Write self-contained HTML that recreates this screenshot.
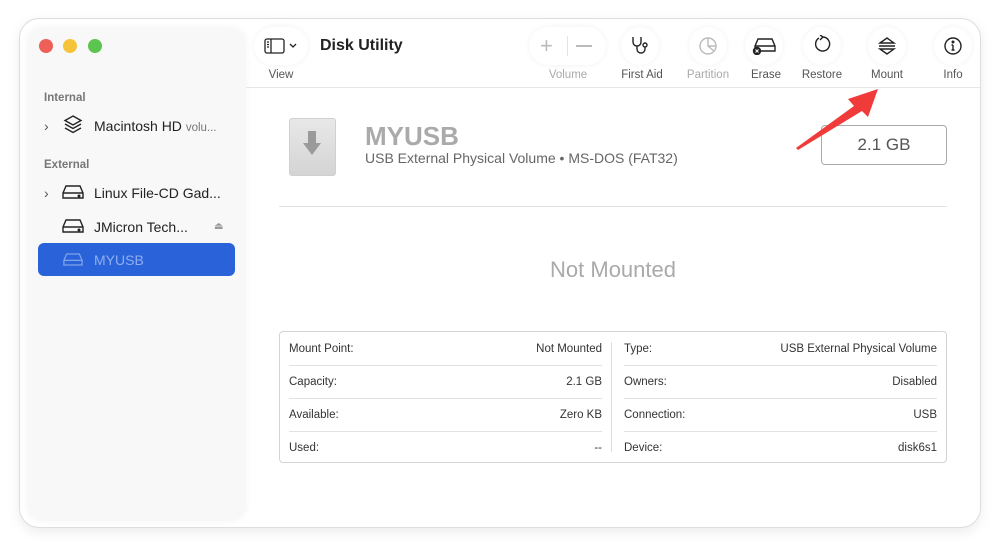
<!DOCTYPE html><html><head><style>
body{margin:0;width:1000px;height:548px;background:#fff;font-family:"Liberation Sans",sans-serif;position:relative;overflow:hidden}
.a{position:absolute}
.win{left:19px;top:18px;width:962px;height:510px;border-radius:20px;border:1px solid #ddd;box-shadow:0 4px 12px rgba(0,0,0,.08);background:#fff;box-sizing:border-box}
.side{left:28px;top:28px;width:217px;height:492px;background:#f8f8f8;border-radius:14px;box-shadow:0 0 8px rgba(0,0,0,.06)}
.dot{width:14px;height:14px;border-radius:50%;top:39px}
.hd{font-size:11.5px;color:#777;font-weight:bold}
.it{font-size:14px;color:#222}
.btn{width:38px;height:38px;border-radius:50%;background:#fff;box-shadow:0 0 6px rgba(0,0,0,.06)}
.lbl{font-size:11.5px;color:#555;top:69px;text-align:center}
.t td{font-size:11.5px;color:#333;height:32px}
</style></head><body>
<div class="a win"></div>
<div class="a side"></div>
<div class="a dot" style="left:39px;background:#ed5f57"></div>
<div class="a dot" style="left:63px;background:#f5c43b"></div>
<div class="a dot" style="left:88px;background:#5cc54f"></div>
<div class="a hd" style="left:44px;top:92px">Internal</div>
<div class="a it" style="left:44px;top:118px;color:#555">›</div>
<svg class="a" style="left:62px;top:114px" width="22" height="22" viewBox="0 0 22 22" fill="none" stroke="#222" stroke-width="1.4"><path d="M11 2l8 4.5-8 4.5-8-4.5z M3 10l8 4.5 8-4.5 M3 14l8 4.5 8-4.5"/></svg>
<div class="a it" style="left:94px;top:118px">Macintosh HD <span style="font-size:11.5px;color:#777">volu...</span></div>
<div class="a hd" style="left:44px;top:159px">External</div>
<div class="a it" style="left:44px;top:185px;color:#555">›</div>
<svg class="a" style="left:62px;top:184px" width="22" height="16" viewBox="0 0 22 16" fill="none" stroke="#222" stroke-width="1.4"><path d="M4 2h14l3 7v5H1V9z M1 9h20"/><circle cx="17" cy="12" r=".8" fill="#222"/></svg>
<div class="a it" style="left:94px;top:185px">Linux File-CD Gad...</div>
<svg class="a" style="left:62px;top:218px" width="22" height="16" viewBox="0 0 22 16" fill="none" stroke="#222" stroke-width="1.4"><path d="M4 2h14l3 7v5H1V9z M1 9h20"/><circle cx="17" cy="12" r=".8" fill="#222"/></svg>
<div class="a it" style="left:94px;top:219px">JMicron Tech...</div>
<div class="a" style="left:214px;top:221px;font-size:10px;color:#999">⏏</div>
<div class="a" style="left:38px;top:243px;width:197px;height:33px;background:#2a63d9;border-radius:6px"></div>
<svg class="a" style="left:63px;top:252px" width="20" height="15" viewBox="0 0 22 16" fill="none" stroke="#7fa3ec" stroke-width="1.4"><path d="M4 2h14l3 7v5H1V9z M1 9h20"/></svg>
<div class="a it" style="left:94px;top:252px;color:#8eaef0">MYUSB</div>
<div class="a btn" style="left:254px;top:27px;width:54px;border-radius:19px"></div>
<svg class="a" style="left:264px;top:38px" width="36" height="16" viewBox="0 0 36 16" fill="none" stroke="#222" stroke-width="1.3"><rect x="1" y="1" width="19" height="14" rx="2"/><path d="M7 1v14 M3 4h2M3 6.5h2M3 9h2 M26 6l3 3 3-3"/></svg>
<div class="a lbl" style="left:262px;width:38px">View</div>
<div class="a" style="left:320px;top:37px;font-size:16px;font-weight:bold;color:#222">Disk Utility</div>
<div class="a btn" style="left:529px;top:27px;width:77px;border-radius:19px"></div>
<div class="a" style="left:540px;top:33px;font-size:22px;color:#bbb">+</div>
<div class="a" style="left:567px;top:36px;width:1px;height:20px;background:#e4e4e4"></div>
<div class="a" style="left:576px;top:45px;width:16px;height:1.5px;background:#bbb"></div>
<div class="a lbl" style="left:538px;width:60px;color:#aaa">Volume</div>
<div class="a btn" style="left:621px;top:27px"></div>
<svg class="a" style="left:630px;top:36px" width="22" height="20" viewBox="0 0 22 20" fill="none" stroke="#222" stroke-width="1.4"><path d="M3 1v5a4 4 0 0 0 8 0V1 M7 10v3a4 4 0 0 0 8 0v-2"/><circle cx="15" cy="9" r="2"/></svg>
<div class="a lbl" style="left:612px;width:60px">First Aid</div>
<div class="a btn" style="left:689px;top:27px"></div>
<svg class="a" style="left:698px;top:36px" width="20" height="20" viewBox="0 0 20 20" fill="none" stroke="#bbb" stroke-width="1.4"><circle cx="10" cy="10" r="8"/><path d="M10 2v8l6 5 M10 10h8"/></svg>
<div class="a lbl" style="left:678px;width:60px;color:#aaa">Partition</div>
<div class="a btn" style="left:745px;top:27px"></div>
<svg class="a" style="left:752px;top:37px" width="26" height="18" viewBox="0 0 26 18" fill="none" stroke="#222" stroke-width="1.4"><path d="M6 2h14l3 7v5H3V9z M3 9h20"/><circle cx="5" cy="14" r="3.5" fill="#222"/><path d="M3.5 12.5l3 3M6.5 12.5l-3 3" stroke="#fff" stroke-width="1"/></svg>
<div class="a lbl" style="left:736px;width:60px">Erase</div>
<div class="a btn" style="left:803px;top:27px"></div>
<svg class="a" style="left:812px;top:35px" width="20" height="20" viewBox="0 0 20 20" fill="none" stroke="#222" stroke-width="1.4"><path d="M7 3a7 7 0 1 0 4-1 M11 2L8 0M11 2L8 5"/></svg>
<div class="a lbl" style="left:792px;width:60px">Restore</div>
<div class="a btn" style="left:868px;top:27px"></div>
<svg class="a" style="left:878px;top:36px" width="18" height="20" viewBox="0 0 18 20" fill="none" stroke="#222" stroke-width="1.4"><path d="M2 7l7-5 7 5z M1 10h16 M2 13l7 5 7-5z"/></svg>
<div class="a lbl" style="left:857px;width:60px">Mount</div>
<div class="a btn" style="left:934px;top:27px"></div>
<svg class="a" style="left:943px;top:36px" width="20" height="20" viewBox="0 0 20 20" fill="none" stroke="#222" stroke-width="1.4"><circle cx="10" cy="10" r="8"/><path d="M10 9v5 M8.5 14h3 M8.5 9H10"/><circle cx="10" cy="6" r=".8" fill="#222"/></svg>
<div class="a lbl" style="left:923px;width:60px">Info</div>
<div class="a" style="left:246px;top:87px;width:734px;height:1px;background:#e6e6e6"></div>
<div class="a" style="left:289px;top:118px;width:47px;height:58px;background:linear-gradient(#e8e8e8,#d4d4d4);border-radius:3px;border:1px solid #d0d0d0;box-sizing:border-box"></div>
<svg class="a" style="left:302px;top:131px" width="20" height="26" viewBox="0 0 20 26"><path d="M6 0h8v12h5L10 24 1 12h5z" fill="#9a9a9a"/></svg>
<div class="a" style="left:365px;top:121px;font-size:26px;font-weight:bold;color:#aaa">MYUSB</div>
<div class="a" style="left:365px;top:150px;font-size:14px;color:#666">USB External Physical Volume • MS-DOS (FAT32)</div>
<div class="a" style="left:821px;top:125px;width:126px;height:40px;border:1px solid #aaa;border-radius:4px;box-sizing:border-box;font-size:17px;color:#555;text-align:center;line-height:38px">2.1 GB</div>
<div class="a" style="left:279px;top:206px;width:668px;height:1px;background:#e2e2e2"></div>
<div class="a" style="left:279px;top:257px;width:668px;text-align:center;font-size:22px;color:#aaa">Not Mounted</div>
<div class="a" style="left:279px;top:331px;width:668px;height:132px;border:1px solid #d4d4d4;border-radius:4px;box-sizing:border-box"></div>
<div class="a" style="left:611px;top:342px;width:1px;height:110px;background:#ddd"></div>
<div class="a" style="left:289px;top:333px;width:313px">
<div style="display:flex;justify-content:space-between;height:32px;line-height:32px;border-bottom:1px solid #e2e2e2;font-size:11.5px;color:#333"><span>Mount Point:</span><span>Not Mounted</span></div>
<div style="display:flex;justify-content:space-between;height:32px;line-height:32px;border-bottom:1px solid #e2e2e2;font-size:11.5px;color:#333"><span>Capacity:</span><span>2.1 GB</span></div>
<div style="display:flex;justify-content:space-between;height:32px;line-height:32px;border-bottom:1px solid #e2e2e2;font-size:11.5px;color:#333"><span>Available:</span><span>Zero KB</span></div>
<div style="display:flex;justify-content:space-between;height:32px;line-height:32px;font-size:11.5px;color:#333"><span>Used:</span><span>--</span></div></div>
<div class="a" style="left:624px;top:333px;width:313px">
<div style="display:flex;justify-content:space-between;height:32px;line-height:32px;border-bottom:1px solid #e2e2e2;font-size:11.5px;color:#333"><span>Type:</span><span>USB External Physical Volume</span></div>
<div style="display:flex;justify-content:space-between;height:32px;line-height:32px;border-bottom:1px solid #e2e2e2;font-size:11.5px;color:#333"><span>Owners:</span><span>Disabled</span></div>
<div style="display:flex;justify-content:space-between;height:32px;line-height:32px;border-bottom:1px solid #e2e2e2;font-size:11.5px;color:#333"><span>Connection:</span><span>USB</span></div>
<div style="display:flex;justify-content:space-between;height:32px;line-height:32px;font-size:11.5px;color:#333"><span>Device:</span><span>disk6s1</span></div></div>
<svg class="a" style="left:790px;top:84px" width="95" height="70" viewBox="0 0 95 70"><path d="M6 64L64 22 58 15 88 5 78 33 72 27 8 66z" fill="#f13a3a"/></svg>
</body></html>
